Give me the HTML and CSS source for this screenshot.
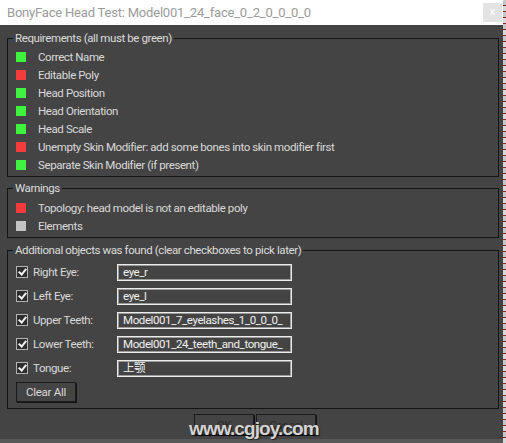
FILE: index.html
```html
<!DOCTYPE html>
<html>
<head>
<meta charset="utf-8">
<link rel="stylesheet" href="styles.css">
</head>
<body>
<div class="window">
  <div class="titlebar">
    <span class="title">BonyFace Head Test: Model001_24_face_0_2_0_0_0_0</span>
    <span class="close">x</span>
  </div>
  <div class="client">
    <fieldset class="group g1">
      <legend>Requirements (all must be green)</legend>
      <div class="status"><span class="led green"></span>Correct Name</div>
      <div class="status"><span class="led red"></span>Editable Poly</div>
      <div class="status"><span class="led green"></span>Head Position</div>
      <div class="status"><span class="led green"></span>Head Orientation</div>
      <div class="status"><span class="led green"></span>Head Scale</div>
      <div class="status"><span class="led red"></span>Unempty Skin Modifier: add some bones into skin modifier first</div>
      <div class="status"><span class="led green"></span>Separate Skin Modifier (if present)</div>
    </fieldset>
    <fieldset class="group g2">
      <legend>Warnings</legend>
      <div class="status"><span class="led red"></span>Topology: head model is not an editable poly</div>
      <div class="status"><span class="led gray"></span>Elements</div>
    </fieldset>
    <fieldset class="group g3">
      <legend>Additional objects was found (clear checkboxes to pick later)</legend>
      <div class="obj"><span class="check"></span><span class="obj-label">Right Eye:</span><span class="field">eye_r</span></div>
      <div class="obj"><span class="check"></span><span class="obj-label">Left Eye:</span><span class="field">eye_l</span></div>
      <div class="obj"><span class="check"></span><span class="obj-label">Upper Teeth:</span><span class="field">Model001_7_eyelashes_1_0_0_0_</span></div>
      <div class="obj"><span class="check"></span><span class="obj-label">Lower Teeth:</span><span class="field">Model001_24_teeth_and_tongue_</span></div>
      <div class="obj"><span class="check"></span><span class="obj-label">Tongue:</span><span class="field">上颚</span></div>
      <button class="btn clear">Clear All</button>
    </fieldset>
    <div class="dialog-buttons">
      <button class="btn dlg">OK</button>
      <button class="btn dlg">Cancel</button>
    </div>
    <div class="watermark">www.cgjoy.com</div>
  </div>
</div>
</body>
</html>
```

FILE: styles.css
```css
html, body {
  margin: 0;
  padding: 0;
}
body {
  width: 506px;
  height: 443px;
  overflow: hidden;
  background: repeating-linear-gradient(180deg, #c6c6c6 0 5px, #8c1c1c 5px 6px, #d8d8d8 6px 11px, #a02020 11px 12px);
  font-family: Roboto, "Liberation Sans", Arial, sans-serif;
}
.window {
  width: 503px;
  height: 443px;
  background: #444444;
  display: flex;
  flex-direction: column;
}
.titlebar {
  height: 25px;
  background: #ffffff;
  display: flex;
  align-items: center;
  padding-left: 7px;
  flex: none;
}
.title {
  color: #9b9b9b;
  font-size: 13px;
  letter-spacing: -0.2px;
}
.close {
  margin-left: auto;
  margin-right: 1px;
  width: 19px;
  height: 19px;
  background: #e3e3e3;
  color: #ffffff;
  font-size: 11px;
  line-height: 18px;
  text-align: center;
}
.client {
  flex: 1;
  position: relative;
  padding: 5px 4px 4px 7px;
  border-bottom: 4px solid #575757;
  font-size: 11.5px;
  letter-spacing: -0.4px;
  color: #dadada;
}
.group {
  margin: 0;
  border: 1px solid #141414;
  padding: 0 4px 2px 5px;
  min-width: 0;
}
.group legend {
  padding: 0 2px;
  line-height: 16px;
  height: 16px;
  color: #dcdcdc;
}
.g1 { padding-top: 2px; }
.g2 { margin-top: 3px; padding-top: 3px; }
.g3 { margin-top: 4px; padding-top: 2px; padding-bottom: 6px; }
.status {
  height: 18px;
  display: flex;
  align-items: center;
  white-space: nowrap;
}
.led {
  width: 10px;
  height: 10px;
  margin-left: 3px;
  margin-right: 12px;
  flex: none;
}
.led.green { background: #3ff23f; }
.led.red { background: #f23c3c; }
.led.gray { background: #c3c3c3; }
.obj {
  height: 24px;
  display: flex;
  align-items: center;
}
.check {
  width: 12px;
  height: 12px;
  box-sizing: border-box;
  margin-left: 3px;
  margin-right: 5px;
  border: 1px solid #b4b4b4;
  background: #2e2e2e;
  position: relative;
  flex: none;
}
.check::after {
  content: "";
  position: absolute;
  left: 3px;
  top: 0px;
  width: 3px;
  height: 6px;
  border: solid #f0f0f0;
  border-width: 0 2px 2px 0;
  transform: rotate(40deg);
}
.obj-label {
  width: 84px;
  flex: none;
}
.field {
  width: 175px;
  height: 17px;
  box-sizing: border-box;
  border: 1px solid #ececec;
  box-shadow: inset 0 0 0 1px #9a9a9a;
  padding-left: 5px;
  line-height: 15px;
  color: #f2f2f2;
  white-space: nowrap;
  overflow: hidden;
  font-family: Roboto, "Noto Sans CJK SC", sans-serif;
}
.btn {
  font-family: Roboto, "Liberation Sans", Arial, sans-serif;
  font-size: 11.5px;
  letter-spacing: -0.3px;
  background: #444444;
  border: 1px solid #1c1c1c;
  box-shadow: 1px 1px 0 #151515;
  padding: 0;
  margin: 0;
}
.clear {
  display: block;
  margin-top: 2px;
  margin-left: 3px;
  width: 60px;
  height: 20px;
  color: #dadada;
}
.dialog-buttons {
  margin-top: 5px;
  display: flex;
  justify-content: center;
  gap: 2px;
  padding-left: 4px;
}
.dlg {
  width: 60px;
  height: 21px;
  color: #2a2a2a;
}
.watermark {
  position: absolute;
  left: 189px;
  top: 394px;
  font-family: "Liberation Sans", Arial, sans-serif;
  font-size: 19px;
  line-height: 19px;
  font-weight: bold;
  letter-spacing: -0.9px;
  color: #d4d4d4;
  text-shadow: 1px 1px 1px rgba(0, 0, 0, 0.6);
}
```
